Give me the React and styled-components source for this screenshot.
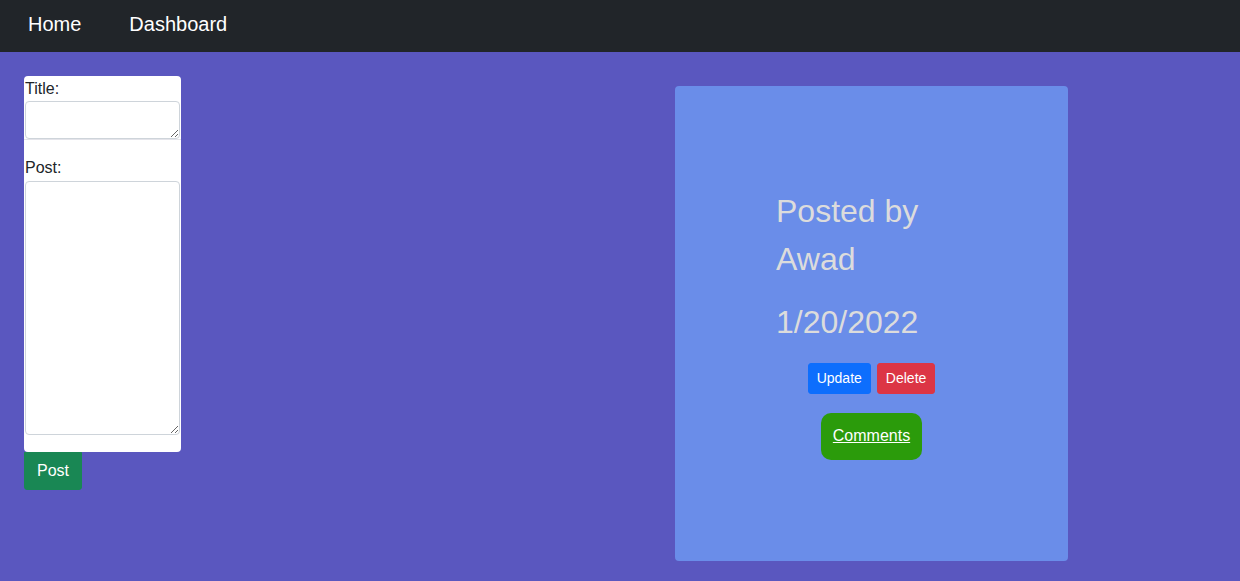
import React from 'react';
import styled, { createGlobalStyle } from 'styled-components';

const GlobalStyle = createGlobalStyle`
  html, body {
    margin: 0;
    padding: 0;
  }
  body {
    font-family: "Liberation Sans", Arial, sans-serif;
    font-size: 16px;
    line-height: 1.5;
    color: #212529;
    background: #5a57bf;
  }
  * { box-sizing: border-box; }
`;

const NavBar = styled.nav`
  height: 52px;
  background: #212529;
  display: flex;
  align-items: center;
  padding: 0 0 4px 28px;
  gap: 48px;
`;

const NavLink = styled.a`
  color: #fff;
  font-size: 20px;
  line-height: 30px;
  text-decoration: none;
`;

const Main = styled.main`
  display: flex;
  align-items: flex-start;
  padding: 24px 0 20px 24px;
  min-height: calc(100vh - 52px);
  background: #5a57bf;
`;

const Form = styled.form`
  width: 157px;
  display: flex;
  flex-direction: column;
`;

const FieldBox = styled.div`
  background: #fff;
  padding: ${(p) => (p.$spaced ? '16px 1px 17px' : '1px 1px 0')};
  border-radius: ${(p) => (p.$spaced ? '0 0 4px 4px' : '4px 4px 0 0')};
  border-top: ${(p) => (p.$spaced ? '1px solid #e4e4ea' : 'none')};
  display: flex;
  flex-direction: column;
`;

const Label = styled.label`
  display: block;
  font-size: 16px;
  line-height: 24px;
  color: #212529;
`;

const TextArea = styled.textarea`
  display: block;
  width: 155px;
  height: ${(p) => p.$h}px;
  margin-top: ${(p) => (p.$tight ? 0 : 1)}px;
  border: 1px solid #ced4da;
  border-radius: 4px;
  resize: both;
  font-family: inherit;
  font-size: 16px;
`;

const Button = styled.button`
  border: 1px solid ${(p) => p.$bg};
  background: ${(p) => p.$bg};
  color: #fff;
  font-family: inherit;
  font-size: ${(p) => (p.$small ? '14px' : '16px')};
  line-height: ${(p) => (p.$small ? '21px' : '24px')};
  padding: ${(p) => (p.$small ? '4px 8px' : '6px 12px')};
  border-radius: 3px;
  cursor: pointer;
`;

const PostButton = styled(Button)`
  align-self: flex-start;
  border-radius: 0 0 3px 3px;
`;

const Card = styled.div`
  width: 393px;
  height: 475px;
  margin-top: 10px;
  margin-left: 494px;
  background: #6a8de9;
  border-radius: 4px;
  display: flex;
  align-items: center;
  justify-content: center;
`;

const CardBody = styled.div`
  width: 191px;
  display: flex;
  flex-direction: column;
`;

const BigText = styled.div`
  font-size: 32px;
  line-height: 48px;
  color: #dcdcdc;
  margin-bottom: ${(p) => p.$mb || 0}px;
`;

const ButtonRow = styled.div`
  display: flex;
  justify-content: center;
  gap: 6px;
  margin-bottom: 19px;
`;

const CommentsLink = styled.a`
  align-self: center;
  background: #2b9b0b;
  color: #fff;
  font-size: 16px;
  line-height: 24px;
  padding: 11px 12px 12px;
  border-radius: 10px;
  text-decoration: underline;
  cursor: pointer;
`;

export default function App() {
  return (
    <>
      <GlobalStyle />
      <NavBar>
        <NavLink href="#">Home</NavLink>
        <NavLink href="#">Dashboard</NavLink>
      </NavBar>
      <Main>
        <Form onSubmit={(e) => e.preventDefault()}>
          <FieldBox>
            <Label>Title:</Label>
            <TextArea $tight $h={38} />
          </FieldBox>
          <FieldBox $spaced>
            <Label>Post:</Label>
            <TextArea $h={254} />
          </FieldBox>
          <PostButton $bg="#198754" type="submit">Post</PostButton>
        </Form>
        <Card>
          <CardBody>
            <BigText $mb={15}>Posted by Awad</BigText>
            <BigText $mb={17}>1/20/2022</BigText>
            <ButtonRow>
              <Button $small $bg="#0d6efd">Update</Button>
              <Button $small $bg="#dc3545">Delete</Button>
            </ButtonRow>
            <CommentsLink>Comments</CommentsLink>
          </CardBody>
        </Card>
      </Main>
    </>
  );
}
